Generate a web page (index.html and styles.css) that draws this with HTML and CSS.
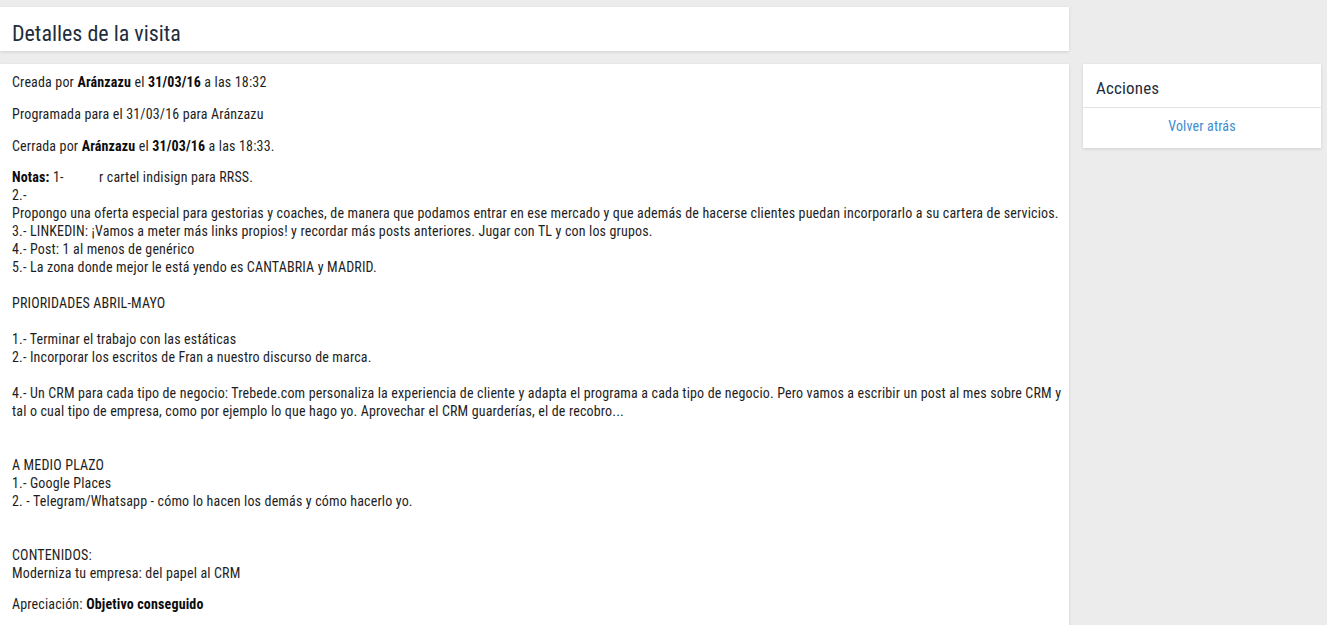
FILE: index.html
```html
<!DOCTYPE html>
<html lang="es">
<head>
<meta charset="utf-8">
<title>Detalles de la visita</title>
<link rel="stylesheet" href="styles.css">
</head>
<body>
<div class="page">
  <div class="row">
    <div class="main-col">
      <div class="card header-card">
        <h1 class="title">Detalles de la visita</h1>
      </div>
    </div>
    <div class="side-col"></div>
  </div>
  <div class="row content-row">
    <div class="main-col">
      <div class="card body-card">
        <p>Creada por <b>Aránzazu</b> el <b>31/03/16</b> a las 18:32</p>
        <p>Programada para el 31/03/16 para Aránzazu</p>
        <p>Cerrada por <b>Aránzazu</b> el <b>31/03/16</b> a las 18:33.</p>
        <p class="notes"><b>Notas:</b> 1- <span class="gap g1"></span>r cartel indisign para RRSS.<br>
2.-<br>
Propongo una oferta especial para gestorias y coaches, de manera que podamos entrar en ese mercado y que además de hacerse clientes puedan incorporarlo a su cartera de servicios.<br>
3.- LINKEDIN: ¡Vamos a meter más links propios! y recordar más posts anteriores. Jugar con TL y con los grupos.<br>
4.- Post: 1 al menos de genérico<br>
5.- La zona donde mejor le está yendo es CANTABRIA y MADRID.<br>
<br>
PRIORIDADES ABRIL-MAYO<br>
<br>
1.- Terminar el trabajo con las estáticas<br>
2.- Incorporar los escritos de Fran a nuestro discurso de marca.<br>
<br>
4.- Un CRM para cada tipo de negocio: Trebede.com personaliza la experiencia de cliente y adapta el programa a cada tipo de negocio. Pero vamos a escribir un post al mes sobre CRM y tal o cual tipo de empresa, como por ejemplo lo que hago yo. Aprovechar el CRM guarderías, el de recobro...<br>
<br>
<br>
A MEDIO PLAZO<br>
1.- Google Places<br>
2. - Telegram/Whatsapp - cómo lo hacen los demás y cómo hacerlo yo.<br>
<br>
<br>
CONTENIDOS:<br>
Moderniza tu empresa: del papel al CRM</p>
        <p>Apreciación: <b>Objetivo conseguido</b></p>
      </div>
    </div>
    <div class="side-col">
      <div class="card side-card">
        <div class="side-head">Acciones</div>
        <div class="side-body"><a class="link" href="#">Volver atrás</a></div>
      </div>
    </div>
  </div>
</div>
</body>
</html>
```

FILE: styles.css
```css
html, body {
  margin: 0;
  padding: 0;
  background: #ececec;
  height: 100%;
  overflow: hidden;
}
body {
  font-family: "Roboto Condensed", Roboto, "Liberation Sans", sans-serif;
  font-size: 14px;
  letter-spacing: 0.16px;
  color: #1e1e1e;
}
.page {
  padding-top: 7px;
}
.row {
  display: flex;
  gap: 14px;
}
.content-row {
  margin-top: 13px;
}
.main-col {
  width: 1069px;
  flex: none;
}
.side-col {
  width: 238px;
  flex: none;
}
.card {
  background: #fff;
  box-shadow: 0 1px 3px rgba(0, 0, 0, 0.12);
}
.header-card {
  height: 44px;
  box-sizing: border-box;
  padding: 13px 12px 0;
}
.title {
  margin: 0;
  font-size: 22px;
  line-height: 27px;
  font-weight: 400;
  letter-spacing: 0;
  color: #1f2d3d;
}
.body-card {
  padding: 9px 2px 20px 12px;
  min-height: 600px;
}
.body-card p {
  margin: 0 0 14px;
  line-height: 18px;
}
.body-card p.notes {
  margin-top: -1px;
  margin-bottom: 13px;
}
.body-card b {
  font-weight: 700;
  color: #0c0c0c;
}
.gap {
  display: inline-block;
}
.g1 {
  width: 32px;
}
.side-head {
  padding: 14px 13px 9px;
  font-size: 17px;
  line-height: 20px;
  color: #1f2d3d;
  border-bottom: 1px solid #e3e3e3;
}
.side-body {
  text-align: center;
  padding: 9px 0 13px;
  line-height: 18px;
}
.link {
  color: #3d8dd0;
  text-decoration: none;
  font-size: 14px;
}
```
